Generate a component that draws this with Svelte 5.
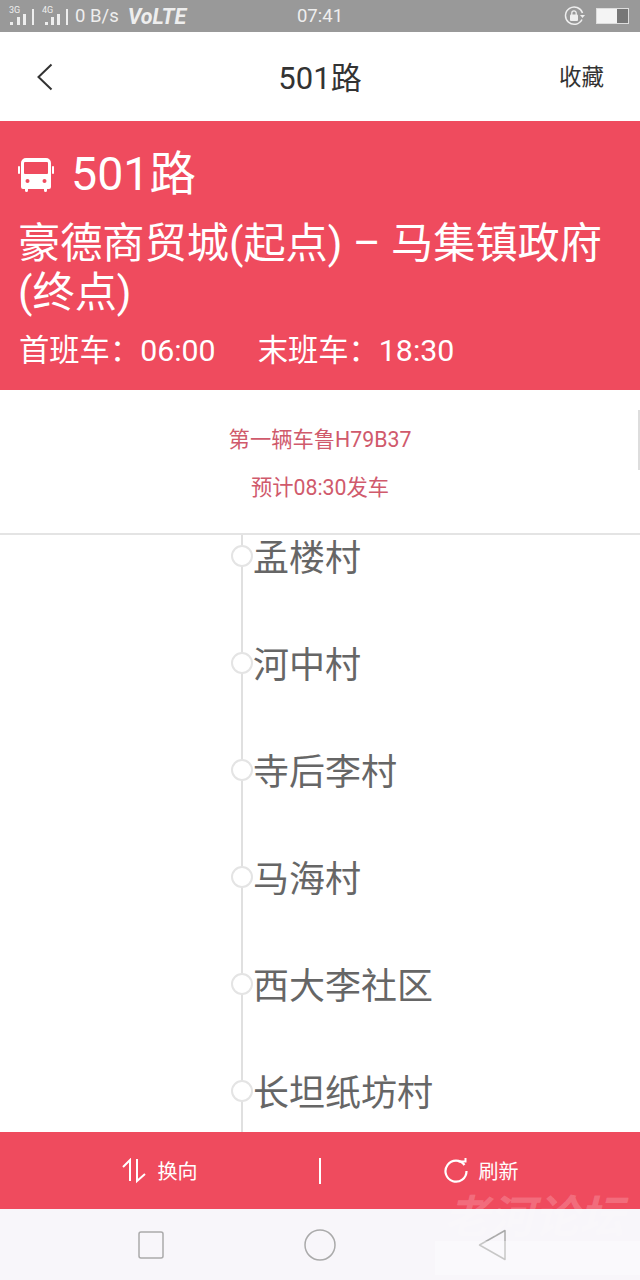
<script>
	const stops = ['孟楼村', '河中村', '寺后李村', '马海村', '西大李社区', '长坦纸坊村'];
</script>

<div class="page">
	<div class="status">
		<div class="status-left">
			<span class="signal"><i class="tag">3G</i><svg width="28" height="16" viewBox="0 0 28 16"><path d="M1 13h3v3H1zM8 8h3v8H8zM14 5h3v11h-3zM23 0h2v16h-2z" fill="#eee"/></svg></span>
			<span class="signal"><i class="tag">4G</i><svg width="28" height="16" viewBox="0 0 28 16"><path d="M3 13h3v3H3zM9 8h3v8H9zM15 5h3v11h-3zM24 0h2v16h-2z" fill="#eee"/></svg></span>
			<span class="speed">0 B/s</span>
			<span class="volte">VoLTE</span>
		</div>
		<span class="clock">07:41</span>
		<div class="status-right">
			<svg width="22" height="20" viewBox="0 0 22 20" fill="none">
				<path d="M18 13.500A8.700 8.700 0 1 1 18.500 7" stroke="#eee" stroke-width="1.500"/>
				<path d="M16 9h5l-2.500 3z" fill="#eee"/>
				<rect x="6" y="8.500" width="8" height="6.500" rx="1" fill="#eee"/>
				<path d="M7.800 9V7a2.200 2.200 0 0 1 4.400 0v2" stroke="#eee" stroke-width="1.300"/>
			</svg>
			<div class="battery"><div class="level"></div></div>
		</div>
	</div>

	<header class="nav">
		<svg class="back" width="18" height="28" viewBox="0 0 18 28" fill="none">
			<path d="M15.500 1.500 2.500 14l13 12.500" stroke="#333" stroke-width="2"/>
		</svg>
		<h1>501路</h1>
		<span class="fav">收藏</span>
	</header>

	<section class="hero">
		<div class="hero-title">
			<svg width="36" height="36" viewBox="0 0 36 36">
				<path fill="#fff" d="M8 2h20a5 5 0 0 1 5 5v24a2 2 0 0 1-2 2h-2v1.500a1.500 1.500 0 0 1-3 0V33H10v1.500a1.500 1.500 0 0 1-3 0V33H5a2 2 0 0 1-2-2V7a5 5 0 0 1 5-5Z"/>
				<rect x="0" y="10" width="2" height="8" rx="1" fill="#fff"/>
				<rect x="34" y="10" width="2" height="8" rx="1" fill="#fff"/>
				<rect x="6" y="6" width="24" height="12" rx="1" fill="#ef4b5e"/>
				<circle cx="9.500" cy="25" r="2" fill="#ef4b5e"/>
				<circle cx="26.500" cy="25" r="2" fill="#ef4b5e"/>
			</svg>
			<span>501路</span>
		</div>
		<p class="route">豪德商贸城(起点) – 马集镇政府(终点)</p>
		<p class="times"><span>首班车：06:00</span><span>末班车：18:30</span></p>
	</section>

	<section class="notice">
		<p>第一辆车鲁H79B37</p>
		<p>预计08:30发车</p>
		<div class="scrollbar"></div>
	</section>

	<ul class="stops">
		{#each stops as stop}
			<li><span class="dot"></span>{stop}</li>
		{/each}
	</ul>

	<footer class="actions">
		<button>
			<svg width="26" height="26" viewBox="0 0 26 26" fill="none" stroke="#fff" stroke-width="2">
				<path d="M1 9 8 2v21"/>
				<path d="M15 1v22l8-7"/>
			</svg>
			换向
		</button>
		<div class="divider"></div>
		<button>
			<svg width="26" height="26" viewBox="0 0 26 26" fill="none" stroke="#fff" stroke-width="2.200">
				<path d="M21.500 7A10.500 10.500 0 1 0 23.500 13"/>
				<path d="M15.500 3.500h7V0" stroke-width="2"/>
			</svg>
			刷新
		</button>
	</footer>

	<nav class="system">
		<svg width="26" height="28" viewBox="0 0 26 28" fill="none"><rect x="1" y="1" width="24" height="26" rx="2" stroke="#aaa" stroke-width="1.500"/></svg>
		<svg width="32" height="32" viewBox="0 0 32 32" fill="none"><circle cx="16" cy="16" r="15" stroke="#aaa" stroke-width="1.500"/></svg>
		<svg width="28" height="32" viewBox="0 0 28 32" fill="none"><path d="M27 1.500v29L1.500 16Z" stroke="#aaa" stroke-width="1.500" stroke-linejoin="round"/></svg>
	</nav>

	<!-- forum stamp over the lower corner -->
	<div class="mark">老河论坛</div>
	<div class="mark-box"></div>
</div>

<style>
	:global(body) {
		margin: 0;
	}

	.page {
		position: relative;
		width: 640px;
		height: 1280px;
		display: flex;
		flex-direction: column;
		overflow: hidden;
		background: #fff;
		font-family: Roboto, "Noto Sans CJK SC", sans-serif;
	}

	.status {
		height: 32px;
		background: #999;
		color: #eee;
		display: grid;
		grid-template-columns: 1fr auto 1fr;
		align-items: center;
		padding: 0 9px;
		box-sizing: border-box;
	}

	.status-left {
		display: flex;
		align-items: center;
		gap: 5px;
	}

	.signal {
		position: relative;
		display: flex;
		padding-top: 1px;
	}

	.tag {
		position: absolute;
		left: 0;
		top: -2px;
		font-style: normal;
		font-size: 9px;
		line-height: 9px;
	}

	.speed {
		font-size: 18.500px;
		margin-left: 0;
	}

	.volte {
		font-size: 21.500px;
		font-style: italic;
		font-weight: 700;
		margin-left: 4px;
	}

	.clock {
		font-size: 18.500px;
	}

	.status-right {
		display: flex;
		justify-content: flex-end;
		align-items: center;
		gap: 10px;
	}

	.battery {
		position: relative;
		width: 33px;
		height: 16px;
		background: #777;
		border: 1px solid #ddd;
		box-sizing: border-box;
		margin-right: 2px;
	}

	.level {
		width: 20px;
		height: 14px;
		background: #f4f4f4;
	}

	.nav {
		height: 89px;
		display: grid;
		grid-template-columns: 1fr auto 1fr;
		align-items: center;
		padding: 0 36px;
		color: #333;
	}

	.back {
		justify-self: start;
	}

	h1 {
		margin: -3px 0 0;
		font-size: 31px;
		font-weight: 400;
	}

	.fav {
		justify-self: end;
		font-size: 22.500px;
		margin-top: -3px;
	}

	.hero {
		height: 269px;
		box-sizing: border-box;
		background: #ef4b5e;
		color: #fff;
		padding: 25px 26px 0 18px;
	}

	.hero-title {
		display: flex;
		align-items: center;
		gap: 17px;
		font-size: 46.500px;
		line-height: 56px;
	}

	.route {
		margin: 17px 0 0 0;
		font-size: 42.200px;
		line-height: 49px;
	}

	.times {
		display: flex;
		gap: 42px;
		margin: 14px 0 0 1px;
		font-size: 30.300px;
		line-height: 40px;
	}

	.notice {
		position: relative;
		height: 145px;
		box-sizing: border-box;
		border-bottom: 2px solid #e4e4e4;
		padding-top: 35px;
		color: #d05a6c;
		font-size: 21.300px;
		text-align: center;
	}

	.notice p {
		margin: 0 0 19px;
		line-height: 29px;
	}

	.scrollbar {
		position: absolute;
		right: 0;
		top: 20px;
		width: 2px;
		height: 60px;
		background: #ddd;
	}

	.stops {
		flex: 1;
		margin: 0;
		padding: 0;
		list-style: none;
		position: relative;
		overflow: hidden;
	}

	.stops::before {
		content: "";
		position: absolute;
		left: 241px;
		top: 0;
		bottom: 0;
		width: 2px;
		background: #e0e0e0;
	}

	li {
		position: relative;
		height: 107px;
		padding-left: 253px;
		font-size: 36px;
		line-height: 48px;
		color: #666;
	}

	.dot {
		position: absolute;
		left: 231px;
		top: 10px;
		width: 18px;
		height: 18px;
		border: 2px solid #e4e4e4;
		border-radius: 50%;
		background: #fff;
	}

	.actions {
		height: 77px;
		background: #ef4b5e;
		display: flex;
		align-items: center;
		color: #fff;
	}

	button {
		flex: 1;
		display: flex;
		justify-content: center;
		align-items: center;
		gap: 10px;
		border: 0;
		padding: 0;
		background: none;
		color: inherit;
		font: inherit;
		font-size: 20px;
	}

	.divider {
		width: 2px;
		height: 26px;
		background: #fff;
	}

	.system {
		height: 71px;
		background: #f8f6fa;
		display: flex;
		justify-content: space-between;
		align-items: center;
		padding: 0 134px 0 138px;
	}

	.system svg:nth-child(2) {
		margin-left: -3px;
	}

	.mark {
		position: absolute;
		left: 444px;
		top: 1195px;
		font-size: 45px;
		font-weight: 700;
		font-style: italic;
		line-height: 45px;
		color: rgba(255, 255, 255, 0.2);
		white-space: nowrap;
	}

	.mark-box {
		position: absolute;
		left: 435px;
		right: 0;
		top: 1241px;
		height: 34px;
		background: rgba(255, 255, 255, 0.35);
	}
</style>
